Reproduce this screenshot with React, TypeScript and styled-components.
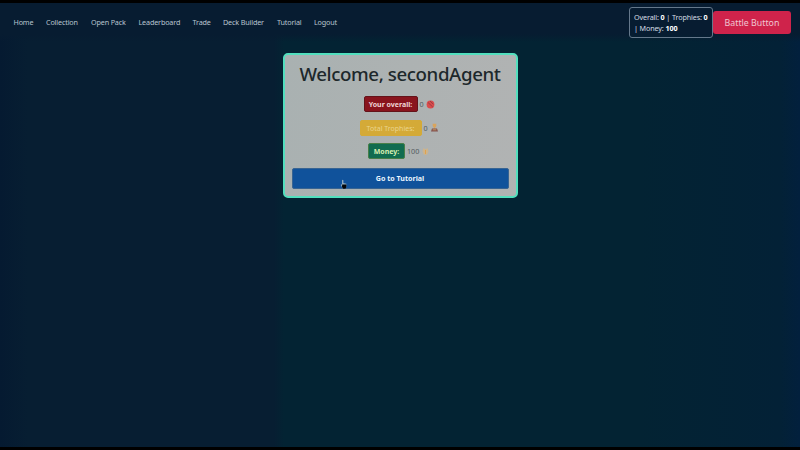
import React from "react";
import styled, { createGlobalStyle } from "styled-components";

const GlobalStyle = createGlobalStyle`
  * { box-sizing: border-box; }
  body { margin: 0; background: #000; font-family: "Noto Sans", "Open Sans", sans-serif; }
`;

const Screen = styled.div`
  height: 450px;
  border-top: 3px solid #000;
  border-bottom: 3px solid #000;
  overflow: hidden;
  background: linear-gradient(90deg, #051a31 0, #071e32 28px, #071e32 274px, #032333 284px, #032333 640px, #032136 780px, #02203d 800px);
`;

const NavBar = styled.nav`
  height: 39px;
  padding: 0 9px 0 13.5px;
  display: flex;
  align-items: center;
  background: linear-gradient(180deg, #071c31 80%, transparent);
`;

const Links = styled.div`
  display: flex;
  gap: 12px;
  flex: 1;
  padding-bottom: 1px;
`;

const NavLink = styled.a<{ $width: number }>`
  width: ${(p) => p.$width}px;
  color: #b9c5d0;
  font-size: 7.2px;
  line-height: 12px;
  letter-spacing: -0.15px;
  white-space: nowrap;
`;

const Summary = styled.div`
  width: 84px;
  height: 31px;
  padding: 3.5px 0 0 4px;
  border: 1px solid #65788b;
  border-radius: 3px;
  color: #d5dde4;
  font-size: 7.2px;
  line-height: 11.5px;
  letter-spacing: -0.12px;
  white-space: nowrap;

  b { color: #fff; }
`;

const BattleButton = styled.button`
  width: 78px;
  height: 23px;
  padding: 0;
  border: 0;
  border-radius: 3px;
  background: #cf234b;
  color: #f0c6d2;
  font: 8.8px "Noto Sans", sans-serif;
`;

const Card = styled.main`
  width: 235px;
  height: 145px;
  margin: 11px auto 0;
  padding: 6px 7px 0;
  border: 2px solid #52dfbe;
  border-radius: 5px;
  background: linear-gradient(100deg, #a9b1b1, #b1b3b3);
  display: flex;
  flex-direction: column;
  align-items: center;
`;

const Title = styled.h1`
  margin: 0;
  color: #1d282b;
  font-size: 18.7px;
  font-weight: 500;
  line-height: 25px;
  letter-spacing: -0.4px;
  white-space: nowrap;
`;

const Stats = styled.div`
  margin: 10px 2px 0 0;
  display: grid;
  gap: 7.5px;
  justify-items: center;
`;

const StatRow = styled.div`
  height: 16px;
  display: flex;
  align-items: center;
  color: #535b60;
  font-size: 7.2px;
`;

const Badge = styled.span<{ $width: number; $fill: string; $edge: string; $ink: string; $weight: number }>`
  width: ${(p) => p.$width}px;
  height: 16px;
  border: 1px solid ${(p) => p.$edge};
  border-radius: 2px;
  background: ${(p) => p.$fill};
  color: ${(p) => p.$ink};
  font-size: 7px;
  font-weight: ${(p) => p.$weight};
  line-height: 15px;
  text-align: center;
  white-space: nowrap;
`;

const Value = styled.span<{ $width: number }>`
  width: ${(p) => p.$width}px;
  margin-left: 2px;
`;

const TutorialButton = styled.button`
  position: relative;
  width: 217px;
  height: 21px;
  margin-top: 8.5px;
  padding: 0 0 1px;
  border: 1px solid #386492;
  border-radius: 2px;
  background: #10529b;
  color: #eaf5ff;
  font: 700 7.1px "Noto Sans", sans-serif;
`;

const Cursor = styled.svg`
  position: absolute;
  left: 47px;
  top: 10px;
`;

const links = [
  { label: "Home", width: 20.5 },
  { label: "Collection", width: 33 },
  { label: "Open Pack", width: 35.5 },
  { label: "Leaderboard", width: 42 },
  { label: "Trade", width: 18.5 },
  { label: "Deck Builder", width: 42 },
  { label: "Tutorial", width: 25 },
  { label: "Logout", width: 24 },
];

const BallIcon = () => (
  <svg width="9" height="9" viewBox="0 0 9 9">
    <circle cx="4.5" cy="4.5" r="3.9" fill="#d94b4b" />
    <path d="M2 2.5 6.8 7M4 1l3.3 3.2" stroke="#963b42" strokeWidth=".9" fill="none" />
  </svg>
);

const TrophyIcon = () => (
  <svg width="9" height="9" viewBox="0 0 9 9">
    <path d="M2.7 .7h3.6v2.5L5.2 4.6v1.2H3.8V4.6L2.7 3.2Z" fill="#d9a45c" />
    <path d="M2 5.4h5l1 3H1Z" fill="#84514d" />
    <path d="M2.7 6.8h3.6" stroke="#d8b26c" strokeWidth=".7" />
  </svg>
);

const MoneyIcon = () => (
  <svg width="9" height="9" viewBox="0 0 9 9">
    <path d="M2.5 1 1.5 4.2l1.4 3.6h3.2l1.4-3.6L6.5 1 4.5 2.4Z" fill="#ceb48c" />
    <path d="M4.5 3v4" stroke="#dfa34e" strokeWidth="1" />
  </svg>
);

export default function App() {
  return (
    <>
      <GlobalStyle />
      <Screen>
        <NavBar>
          <Links>
            {links.map((l) => <NavLink key={l.label} $width={l.width}>{l.label}</NavLink>)}
          </Links>
          <Summary>
            Overall: <b>0</b> | Trophies: <b>0</b><br />| Money: <b>100</b>
          </Summary>
          <BattleButton>Battle Button</BattleButton>
        </NavBar>
        <Card>
          <Title>Welcome, secondAgent</Title>
          <Stats>
            <StatRow>
              <Badge $width={54} $fill="#89141d" $edge="#64131a" $ink="#efd5d5" $weight={700}>Your overall:</Badge>
              <Value $width={6}>0</Value><BallIcon />
            </StatRow>
            <StatRow>
              <Badge $width={62} $fill="#d4aa37" $edge="#d4aa37" $ink="#ead48c" $weight={400}>Total Trophies:</Badge>
              <Value $width={6}>0</Value><TrophyIcon />
            </StatRow>
            <StatRow>
              <Badge $width={37} $fill="#116c50" $edge="#487f48" $ink="#d8efb2" $weight={700}>Money:</Badge>
              <Value $width={14}>100</Value><MoneyIcon />
            </StatRow>
          </Stats>
          <TutorialButton>
            Go to Tutorial
            <Cursor width="8" height="10" viewBox="0 0 8 10">
              <path d="M2 5V1.2Q2.7.3 3.4 1.2V4l3 .8V8L5.5 9.5H2.7L.7 6Z" fill="#8da8bd" />
              <path d="M2.2 5.5h4.2V8L5.5 9.7H3L2 8Z" fill="#020507" />
            </Cursor>
          </TutorialButton>
        </Card>
      </Screen>
    </>
  );
}
